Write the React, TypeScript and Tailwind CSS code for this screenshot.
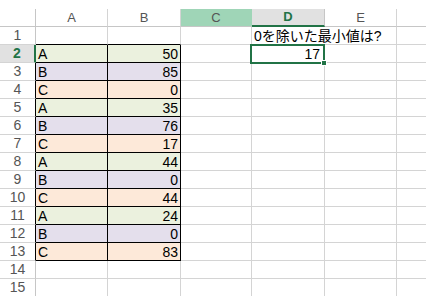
import clsx from 'clsx';

type Row = { label: string; value: number };

const data: Row[] = [
  { label: 'A', value: 50 },
  { label: 'B', value: 85 },
  { label: 'C', value: 0 },
  { label: 'A', value: 35 },
  { label: 'B', value: 76 },
  { label: 'C', value: 17 },
  { label: 'A', value: 44 },
  { label: 'B', value: 0 },
  { label: 'C', value: 44 },
  { label: 'A', value: 24 },
  { label: 'B', value: 0 },
  { label: 'C', value: 83 },
];

const fills: Record<string, string> = {
  A: 'bg-[#ebf1de]',
  B: 'bg-[#e4dfec]',
  C: 'bg-[#fde9d9]',
};

const font = "font-['Liberation_Sans','Noto_Sans_CJK_JP',sans-serif]";

function ColHeader({ letter, width, kind }: { letter?: string; width: string; kind?: 'hover' | 'active' }) {
  return (
    <div
      className={clsx(
        'h-[18px] shrink-0 flex items-center justify-center border-r text-[13px]',
        width,
        kind === 'hover' && 'bg-[#9fd5b7] border-r-[#9fd5b7] text-[#555] border-b border-b-[#c6c6c6]',
        kind === 'active' && 'bg-[#e1e1e1] border-r-[#c6c6c6] text-[#217346] font-bold border-b-2 border-b-[#217346]',
        !kind && 'border-r-[#d4d4d4] text-[#555] border-b border-b-[#c6c6c6]'
      )}
    >
      {letter}
    </div>
  );
}

function RowHeader({ n }: { n: number }) {
  const active = n === 2;
  const boxed = n >= 3 && n <= 13;
  return (
    <div
      className={clsx(
        'w-[36px] h-[18px] shrink-0 flex items-center justify-center text-[14px] border-b border-b-[#d4d4d4]',
        active && 'bg-[#e1e1e1] text-[#217346] font-bold border-r-2 border-r-[#217346]',
        boxed && 'text-[#555] border-r border-r-black',
        !active && !boxed && 'text-[#555] border-r border-r-[#c6c6c6]'
      )}
    >
      {n}
    </div>
  );
}

function Cell({ width, className, children }: { width: string; className?: string; children?: React.ReactNode }) {
  return (
    <div
      className={clsx(
        'h-[18px] shrink-0 flex items-end border-r border-b border-r-[#d4d4d4] border-b-[#d4d4d4] text-[14px] leading-[14px] text-black',
        width,
        className
      )}
    >
      {children}
    </div>
  );
}

export default function App() {
  const rows = Array.from({ length: 15 }, (_, i) => i + 1);

  return (
    <div className={clsx('relative w-[426px] h-[296px] overflow-hidden bg-white', font)}>
      <div className="h-[9px]" />
      {/* column headers */}
      <div className="flex">
        <div className="w-[36px] h-[18px] shrink-0 border-r border-b border-r-[#c6c6c6] border-b-[#c6c6c6]" />
        <ColHeader letter="A" width="w-[72px]" />
        <ColHeader letter="B" width="w-[73px]" />
        <ColHeader letter="C" width="w-[71px]" kind="hover" />
        <ColHeader letter="D" width="w-[73px]" kind="active" />
        <ColHeader letter="E" width="w-[72px]" />
        <ColHeader width="w-[72px]" />
      </div>

      {rows.map((n) => {
        const item = n >= 2 && n <= 13 ? data[n - 2] : null;
        return (
          <div key={n} className="flex">
            <RowHeader n={n} />
            <Cell
              width="w-[72px]"
              className={clsx(
                item && fills[item.label],
                item && 'border-r-black border-b-black',
                n === 1 && 'border-b-black'
              )}
            >
              {item && <span className="pl-[2px] pb-[1px]">{item.label}</span>}
            </Cell>
            <Cell
              width="w-[73px]"
              className={clsx(
                'justify-end',
                item && fills[item.label],
                item && 'border-r-black border-b-black',
                n === 1 && 'border-b-black'
              )}
            >
              {item && <span className="pr-[2px] pb-[1px]">{item.value}</span>}
            </Cell>
            <Cell width="w-[71px]" />
            <Cell width="w-[73px]" className={clsx(n === 1 && 'border-r-transparent', 'overflow-visible')}>
              {n === 1 && <span className="pl-[2px] pb-[1px] whitespace-nowrap">0を除いた最小値は?</span>}
              {n === 2 && <span className="ml-auto pr-[4px] pb-[1px]">17</span>}
            </Cell>
            <Cell width="w-[72px]" />
            <Cell width="w-[72px]" />
          </div>
        );
      })}

      {/* selected cell D2 */}
      <div className="absolute left-[250px] top-[44px] w-[75px] h-[20px] border-2 border-[#217346] pointer-events-none">
        <div className="absolute -right-[4px] -bottom-[4px] w-[6px] h-[6px] bg-[#217346] border border-white" />
      </div>
    </div>
  );
}
